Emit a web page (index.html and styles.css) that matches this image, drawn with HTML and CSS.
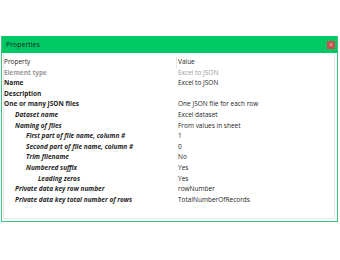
FILE: index.html
```html
<!DOCTYPE html>
<html lang="en">

<head>
    <meta charset="utf-8">
    <title>Properties</title>
    <link rel="stylesheet" href="styles.css">
</head>

<body>

    <div class="vindue">
        <header class="titel">
            <span>Properties</span>
            <button class="luk">x</button>
        </header>

        <section class="indhold">
            <div class="raekke hoved">
                <span class="navn">Property</span>
                <span class="vaerdi">Value</span>
            </div>
            <div class="raekke graa">
                <span class="navn b">Element type</span>
                <span class="vaerdi">Excel to JSON</span>
            </div>
            <div class="raekke">
                <span class="navn b">Name</span>
                <span class="vaerdi">Excel to JSON</span>
            </div>
            <div class="raekke">
                <span class="navn b">Description</span>
                <span class="vaerdi"></span>
            </div>
            <div class="raekke">
                <span class="navn b">One or many JSON files</span>
                <span class="vaerdi">One JSON file for each row</span>
            </div>
            <div class="raekke">
                <span class="navn bi n1">Dataset name</span>
                <span class="vaerdi">Excel dataset</span>
            </div>
            <div class="raekke">
                <span class="navn bi n1">Naming of files</span>
                <span class="vaerdi">From values in sheet</span>
            </div>
            <div class="raekke">
                <span class="navn bi n2">First part of file name, column #</span>
                <span class="vaerdi">1</span>
            </div>
            <div class="raekke">
                <span class="navn bi n2">Second part of file name, column #</span>
                <span class="vaerdi">0</span>
            </div>
            <div class="raekke">
                <span class="navn bi n2">Trim filename</span>
                <span class="vaerdi">No</span>
            </div>
            <div class="raekke">
                <span class="navn bi n2">Numbered suffix</span>
                <span class="vaerdi">Yes</span>
            </div>
            <div class="raekke">
                <span class="navn bi n3">Leading zeros</span>
                <span class="vaerdi">Yes</span>
            </div>
            <div class="raekke">
                <span class="navn bi n1">Private data key row number</span>
                <span class="vaerdi">rowNumber</span>
            </div>
            <div class="raekke">
                <span class="navn bi n1">Private data key total number of rows</span>
                <span class="vaerdi">TotalNumberOfRecords</span>
            </div>
        </section>
    </div>

</body>

</html>
```

FILE: styles.css
```css
body {
    margin: 0;
    background: #fff;
    font-family: "Open Sans", sans-serif;
}

.vindue {
    margin: 36px 2px 0 1px;
    height: 186px;
    border: 1px solid #3cc47e;
    border-top: none;
    box-sizing: border-box;
    display: flex;
    flex-direction: column;
}

.titel {
    background: #00c864;
    height: 17px;
    display: flex;
    align-items: center;
    justify-content: space-between;
    padding: 0 2px 0 4px;
    font-size: 7px;
    color: #1c2a22;
}

.luk {
    width: 8px;
    height: 8px;
    padding: 0;
    border: none;
    background: #c9504f;
    color: #f3d0d0;
    font-size: 6px;
    line-height: 7px;
    font-family: "Open Sans", sans-serif;
}

.indhold {
    flex: 1;
    margin: 1px 2px 2px 1px;
    border: 1px solid #e6e6e6;
    border-top: none;
    padding-top: 3px;
}

.raekke {
    display: grid;
    grid-template-columns: 172px 1fr;
    height: 10.6px;
    font-size: 6.5px;
    line-height: 10.6px;
    color: #1e1e1e;
    white-space: nowrap;
}

.navn {
    padding-left: 0;
}

.vaerdi {
    padding-left: 2px;
}

.hoved .vaerdi {
    border-left: 1px solid #e8e8e8;
    padding-left: 1px;
}

.graa {
    color: #9a9a9a;
}

.b {
    font-weight: bold;
}

.bi {
    font-weight: bold;
    font-style: italic;
}

.n1 {
    padding-left: 11px;
}

.n2 {
    padding-left: 22px;
}

.n3 {
    padding-left: 34px;
}
```
